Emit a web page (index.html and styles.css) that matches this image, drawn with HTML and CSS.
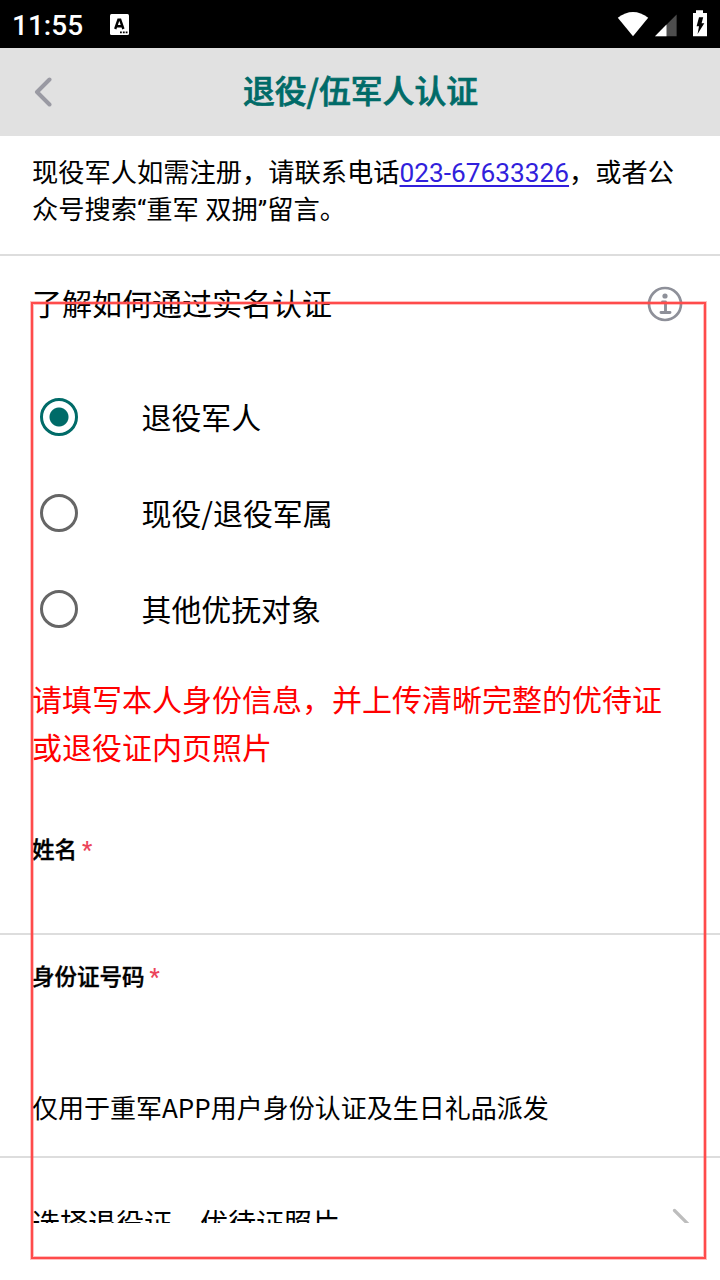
FILE: index.html
```
<!DOCTYPE html>
<html lang="zh-CN">
<head>
    <meta charset="UTF-8">
    <meta name="viewport" content="width=device-width, initial-scale=1.0">
    <title>退役/伍军人认证</title>
    <link rel="stylesheet" href="styles.css">
</head>
<body>
    <div class="screen">
        <!-- 状态栏 -->
        <div class="status-bar">
            <span class="time">11:55</span>
            <svg class="icon-input" width="19" height="21" viewBox="0 0 19 21">
                <rect width="19" height="21" rx="1.5" fill="#fff"/>
                <path d="M5.2 15 8.4 5.8H10.2L13.4 15M6.8 12.2h5" fill="none" stroke="#000" stroke-width="2.4"/>
                <path d="M10 18.3h1.8M12.9 18.3h1.8M15.7 18.3h1.8" stroke="#000" stroke-width="1.7"/>
            </svg>
            <svg class="icon-system" width="90" height="27" viewBox="0 0 90 27">
                <path d="M.8 6.7Q16 -4.8 31.2 6.7L16 25.2Z" fill="#fff"/>
                <path d="M38 25.2 59.6 3.4V25.2Z" fill="#4d4d4d"/>
                <path d="M38 25.2 49.5 13.6V25.2Z" fill="#fff"/>
                <path d="M76 2H79V-.8H86V2H90V25.2H76Z" fill="#fff"/>
                <path d="M82 6.2H86.2L84.6 12.3H87.3L80.6 23 82 15.2H79.6Z" fill="#000"/>
            </svg>
        </div>

        <!-- 标题栏 -->
        <header class="nav-bar">
            <svg class="back" width="18" height="30" viewBox="0 0 18 30">
                <path d="M15.5 2.5 3 15 15.5 27.5" fill="none" stroke="#9a9aa3" stroke-width="4" stroke-linecap="round" stroke-linejoin="round"/>
            </svg>
            <h1>退役/伍军人认证</h1>
        </header>

        <p class="notice">现役军人如需注册，请联系电话<a href="tel:023-67633326">023-67633326</a>，或者公众号搜索<span class="latin">“</span>重军<span class="latin"> </span>双拥<span class="latin">”</span>留言。</p>

        <!-- 认证表单 -->
        <main class="form">
            <div class="guide">
                <span>了解如何通过实名认证</span>
                <svg width="36" height="36" viewBox="0 0 36 36" fill="none" stroke="#8e9099">
                    <circle cx="18" cy="18" r="16" stroke-width="2.7"/>
                    <circle cx="18" cy="10" r="2.6" fill="#8e9099" stroke="none"/>
                    <path d="M15.5 16H18.5V26M14 26.5H23" stroke-width="2.9" stroke-linecap="round" stroke-linejoin="round"/>
                </svg>
            </div>

            <div class="options">
                <label class="option"><input type="radio" name="type" checked><span>退役军人</span></label>
                <label class="option"><input type="radio" name="type"><span>现役/退役军属</span></label>
                <label class="option"><input type="radio" name="type"><span>其他优抚对象</span></label>
            </div>

            <p class="warning">请填写本人身份信息，并上传清晰完整的优待证或退役证内页照片</p>

            <div class="field field-name">
                <span class="label">姓名<i>*</i></span>
            </div>
            <div class="field field-id">
                <span class="label">身份证号码<i>*</i></span>
                <p class="hint">仅用于重军APP用户身份认证及生日礼品派发</p>
            </div>
            <div class="upload">
                <span>选择退役证、优待证照片</span>
                <svg width="18" height="30" viewBox="0 0 18 30">
                    <path d="M2.5 2.5 15 15 2.5 27.5" fill="none" stroke="#bdbdbd" stroke-width="3.2" stroke-linecap="round"/>
                </svg>
            </div>
        </main>

        <!-- 红色标注框 -->
        <div class="highlight"></div>
    </div>
</body>
</html>
```

FILE: styles.css
```
* {
    box-sizing: border-box;
}

body {
    margin: 0;
    background-color: #fff;
    color: #000;
    font-family: "Noto Sans CJK SC", sans-serif;
}

.screen {
    position: relative;
    width: 720px;
    height: 1280px;
    overflow: hidden;
}

p,
h1 {
    margin: 0;
}

/* 状态栏 */
.status-bar {
    display: flex;
    align-items: center;
    height: 48px;
    padding: 0 12px 0 12px;
    background-color: #000;
    color: #fff;
}

.time {
    width: 98px;
    padding-top: 3px;
    font: 500 28px/46px Roboto, sans-serif;
}

.icon-system {
    margin-left: auto;
    margin-right: 1px;
    overflow: visible;
}

/* 标题栏 */
.nav-bar {
    display: flex;
    align-items: center;
    height: 88px;
    padding: 0 34px;
    background-color: #e1e1e1;
}

.nav-bar h1 {
    flex: 1;
    margin-right: 17px;
    padding-bottom: 6px;
    color: #006b68;
    font-size: 31.8px;
    font-weight: 500;
    line-height: 44px;
    text-align: center;
    -webkit-text-stroke: 0.7px #006b68;
}

.notice {
    height: 120px;
    padding: 17px 32px 0;
    border-bottom: 2px solid #ddd;
    font-size: 26.25px;
    line-height: 37px;
}

.notice a,
.latin {
    font-family: Roboto, sans-serif;
    line-height: 1;
}

.notice a {
    color: #311fdc;
    text-underline-offset: 3px;
    text-decoration-thickness: 2px;
}

/* 表单 */
.form {
    height: 966.5px;
    overflow: hidden;
}

.guide {
    display: flex;
    align-items: center;
    justify-content: space-between;
    height: 96px;
    padding: 0 37px 0 32px;
    font-size: 30px;
}

.guide span {
    padding-bottom: 4px;
}

.options {
    padding: 17px 40px 0;
}

.option {
    display: flex;
    align-items: center;
    height: 96px;
    font-size: 29.9px;
}

.option span {
    padding-bottom: 2px;
}

.option input {
    appearance: none;
    width: 38px;
    height: 38px;
    margin: 0 63.5px 0 0;
    border: 3px solid #666;
    border-radius: 50%;
}

.option input:checked {
    border-color: #006b68;
    background: radial-gradient(circle, #006b68 9px, transparent 10px);
}

.warning {
    padding: 17px 32px 0;
    color: #f00;
    font-size: 30px;
    line-height: 48px;
}

.field {
    padding: 0 32px;
    border-bottom: 2px solid #ddd;
}

.field-name {
    height: 165px;
    padding-top: 62px;
}

.field-id {
    height: 223px;
    padding-top: 24px;
}

.label {
    display: block;
    font-size: 22.5px;
    font-weight: 500;
    line-height: 32px;
    -webkit-text-stroke: 0.4px #000;
}

.label i {
    margin-left: 5px;
    color: #eb445a;
    font-family: Roboto, sans-serif;
    font-size: 23px;
    font-style: normal;
    line-height: 1;
    -webkit-text-stroke: 0;
}

.hint {
    margin-top: 96px;
    font-size: 26px;
    line-height: 40px;
}

.upload {
    display: flex;
    align-items: center;
    justify-content: space-between;
    height: 130px;
    padding: 0 30px 0 32px;
    font-size: 28px;
}

.upload span {
    padding-bottom: 2px;
}

/* 标注框 */
.highlight {
    position: absolute;
    top: 302px;
    left: 31px;
    width: 675px;
    height: 957px;
    border: 2px solid #ff4b4b;
    box-shadow: 0 0 0 1px rgba(255, 75, 75, 0.35), inset 0 0 0 1px rgba(255, 75, 75, 0.35);
}
```
